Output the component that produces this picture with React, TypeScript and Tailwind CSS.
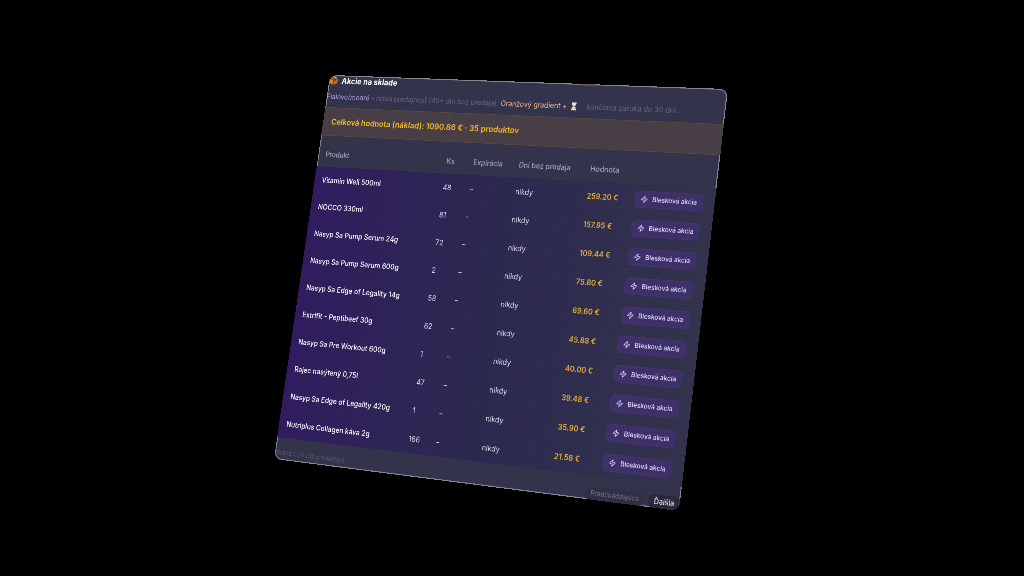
import React from "react";
import { Zap } from "lucide-react";

type Product = { name: string; qty: number; value: string };

const products: Product[] = [
  { name: "Vitamin Well 500ml", qty: 48, value: "259.20 €" },
  { name: "NOCCO 330ml", qty: 81, value: "157.95 €" },
  { name: "Nasyp Sa Pump Serum 24g", qty: 72, value: "109.44 €" },
  { name: "Nasyp Sa Pump Serum 600g", qty: 2, value: "75.80 €" },
  { name: "Nasyp Sa Edge of Legality 14g", qty: 58, value: "69.60 €" },
  { name: "Extrifit - Peptibeef 30g", qty: 62, value: "45.88 €" },
  { name: "Nasyp Sa Pre Workout 600g", qty: 1, value: "40.00 €" },
  { name: "Rajec nasýtený 0,75l", qty: 47, value: "39.48 €" },
  { name: "Nasyp Sa Edge of Legality 420g", qty: 1, value: "35.90 €" },
  { name: "Nutriplus Collagen káva 2g", qty: 166, value: "21.58 €" },
];

function BoxIcon() {
  return (
    <svg viewBox="0 0 20 20" className="size-5" aria-hidden="true">
      <path d="M10 1 18.5 5v10L10 19 1.5 15V5z" fill="#d0892f" />
      <path d="M10 1 18.5 5 10 9 1.5 5z" fill="#e3a54c" />
      <path d="M10 9v10l8.5-4V5z" fill="#b87626" />
      <path d="M1.5 5 10 9l8.500-4M10 9v10M5.500 3 14 7v4" fill="none" stroke="#4a3026" strokeWidth="1.6" />
    </svg>
  );
}

function HourglassIcon() {
  return (
    <svg viewBox="0 0 16 16" className="mx-0.5 inline-block size-4 align-[-3px]" aria-hidden="true">
      <path d="M4 2h8v3.500L9 8l3 2.500V14H4v-3.500L7 8 4 5.500z" fill="#d9dce0" />
      <path d="M5.500 5h5L8 7.500zM5 13c0-2 1.500-2.500 3-3.500 1.500 1 3 1.500 3 3.500z" fill="#e8c98a" />
      <path d="M3 1.500h10M3 14.500h10" stroke="#efe9dc" strokeWidth="2" />
    </svg>
  );
}

export default function App() {
  return (
    <main className="flex h-screen items-center justify-center overflow-hidden bg-black font-['Inter',sans-serif]">
      <section className="relative w-full max-w-[816px] shrink-0 overflow-hidden rounded-2xl bg-[#33334b] text-sm text-[#dedeea] ring-2 ring-[#85868f] ring-inset [transform:matrix3d(0.493,0.0406,0,-0.0001126,-0.06804,0.52241,0,-0.00003825,0,0,1,0,-18.08,-8.23,0,1)]">
        <span className="absolute top-0 right-[256px] h-1 w-7 rounded-b bg-[#6b5145]" aria-hidden="true" />
        <header className="h-[66px]">
          <h1 className="flex h-[22px] items-center gap-2 text-base font-bold text-white">
            <BoxIcon />
            Akcie na sklade
          </h1>
          <p className="mt-2.5 leading-6 whitespace-nowrap text-[#66677e]">
            <span className="text-[#b3a2ee]">Fialovo/modré</span> – nízka predajnosť (40+ dní bez predaja).{" "}
            <span className="text-[#f0b68a]">Oranžový gradient +</span> <HourglassIcon /> – končiaca záruka do 30 dní.
          </p>
        </header>

        <div className="flex h-[58px] items-center border-y border-[#5f4b40] bg-[#483e46] px-[18px] text-base font-semibold text-[#f5b921]">
          Celková hodnota (náklad): 1090.86 € · 35 produktov
        </div>

        <table className="w-full table-fixed text-left">
          <colgroup>
            <col className="w-[262px]" />
            <col className="w-14" />
            <col className="w-[94px]" />
            <col className="w-[143px]" />
            <col className="w-[94px]" />
            <col />
          </colgroup>
          <thead>
            <tr className="h-[63px] whitespace-nowrap text-[#a4a5b6]">
              <th className="px-4 pt-3.5 font-medium">Produkt</th>
              <th className="px-4 pt-3.5 font-medium">Ks</th>
              <th className="px-4 pt-3.5 font-medium">Expirácia</th>
              <th className="px-4 pt-3.5 font-medium">Dni bez predaja</th>
              <th className="px-4 pt-3.5 font-medium">Hodnota</th>
              <th className="px-4 pt-3.5 font-medium" aria-label="Akcia" />
            </tr>
          </thead>
          <tbody className="bg-linear-to-r from-[#301c5f] via-[#2c294f] to-[#33334d]">
            {products.map((p) => (
              <tr key={p.name} className="h-[54px] border-t border-black/5 whitespace-nowrap">
                <td className="px-4 font-medium text-white">{p.name}</td>
                <td className="px-4">{p.qty}</td>
                <td className="px-4">–</td>
                <td className="px-4">nikdy</td>
                <td className="px-4 font-semibold text-[#e5ac35]">{p.value}</td>
                <td className="px-4">
                  <button
                    type="button"
                    className="flex h-8 items-center gap-2 rounded-lg border border-[#43376f] bg-[#3e3169] px-2.5 text-xs font-medium text-[#e0d9fb]"
                  >
                    <Zap className="size-3.5" />
                    Blesková akcia
                  </button>
                </td>
              </tr>
            ))}
          </tbody>
        </table>

        <footer className="flex h-[43px] items-end justify-between">
          <span className="pb-1.5 text-xs text-[#5b5c6c]">Strana 1 / 4 (35 produktov)</span>
          <div className="flex gap-2">
            <button type="button" disabled className="h-6 rounded-lg bg-[#303044] px-2.5 text-xs text-[#737486]">
              Predchádzajúca
            </button>
            <button type="button" className="h-6 rounded-lg bg-[#29293a] px-2.5 text-[13px] font-medium text-[#dedee6]">
              Ďalšia
            </button>
          </div>
        </footer>
      </section>
    </main>
  );
}
